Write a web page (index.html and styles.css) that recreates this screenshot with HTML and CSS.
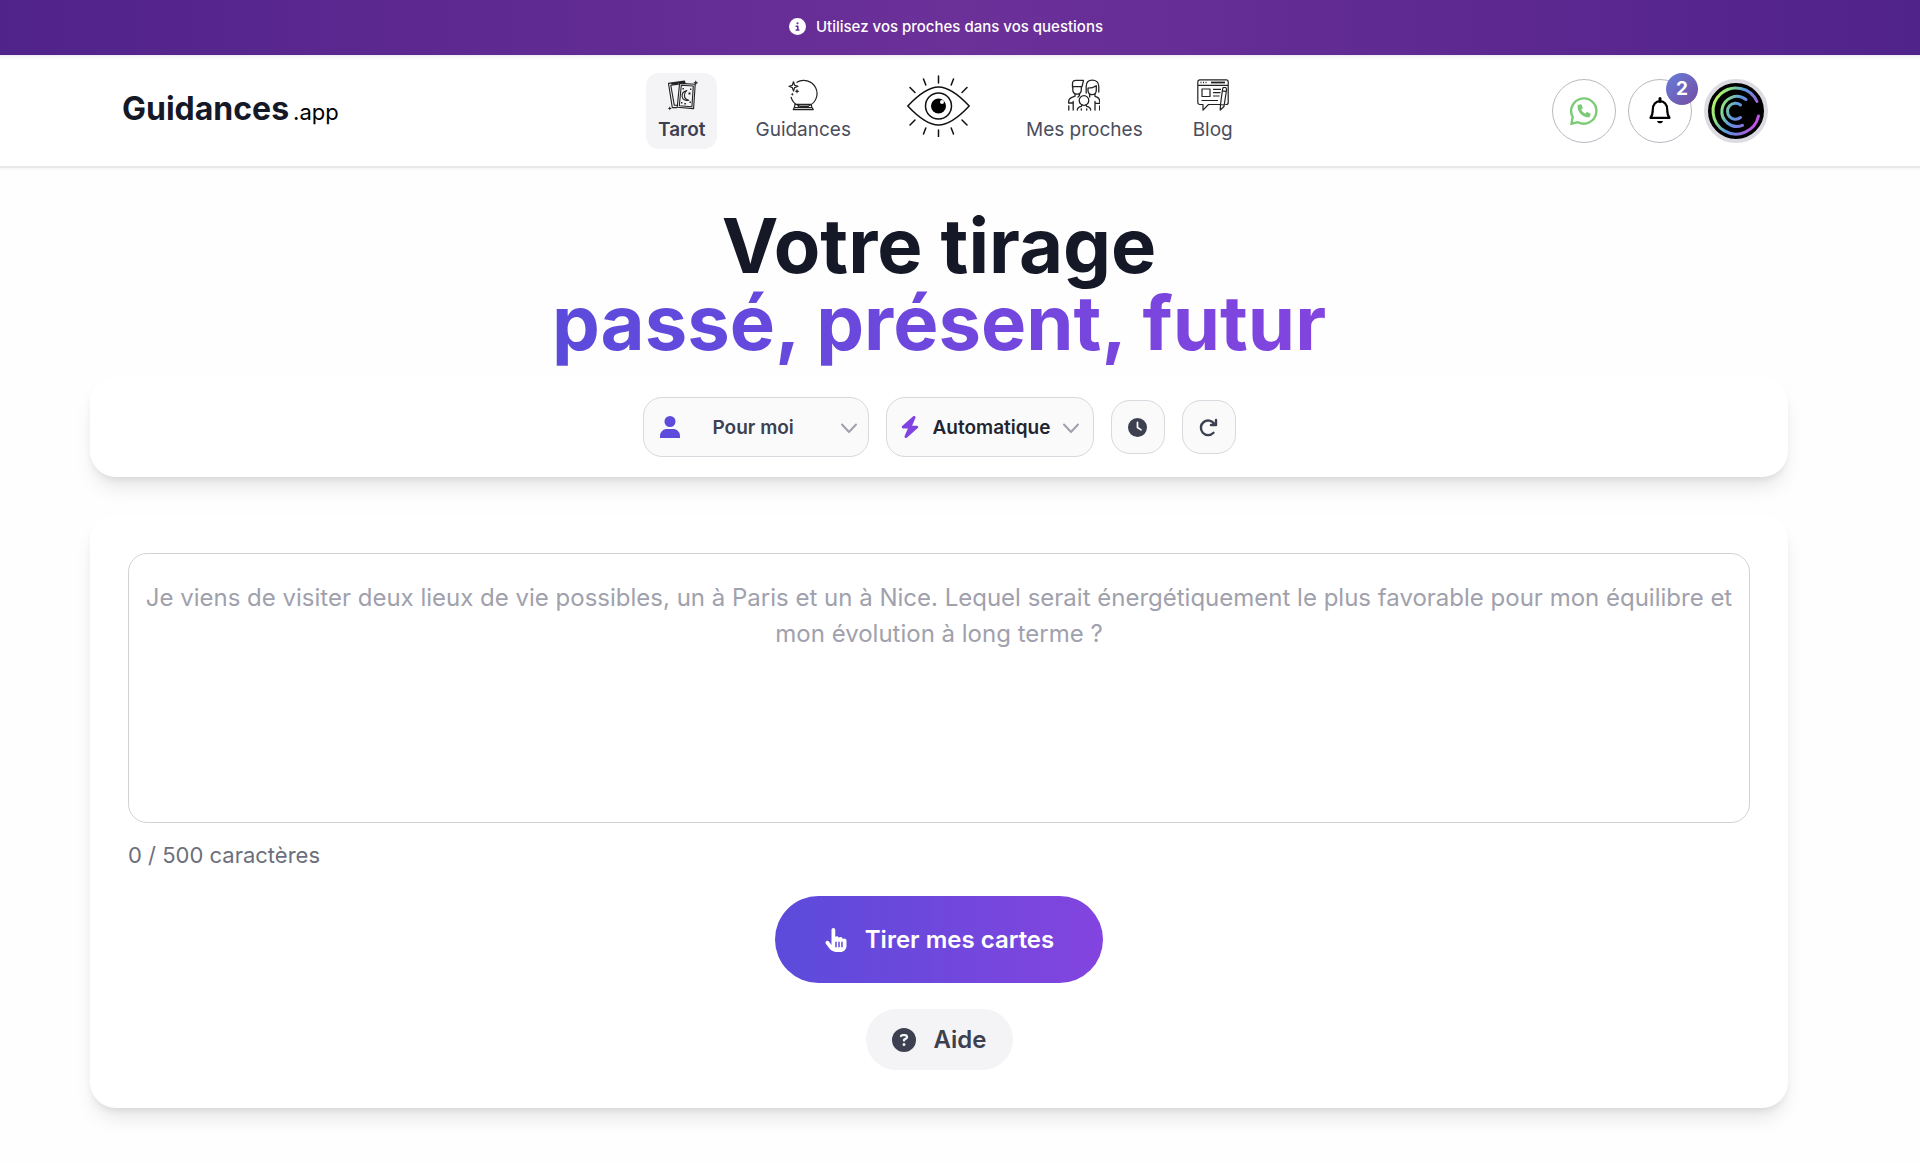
FILE: index.html
```html
<!DOCTYPE html>
<html lang="fr">
<head>
<meta charset="utf-8">
<meta name="viewport" content="width=device-width, initial-scale=1">
<title>Guidances.app</title>
<link rel="stylesheet" href="styles.css">
</head>
<body>
<div class="banner">
  <svg class="banner-icon" viewBox="0 0 512 512" fill="currentColor" aria-hidden="true"><path d="M256 512A256 256 0 1 0 256 0a256 256 0 1 0 0 512zM216 336l24 0 0-64-24 0c-13.3 0-24-10.7-24-24s10.7-24 24-24l48 0c13.3 0 24 10.7 24 24l0 88 8 0c13.3 0 24 10.7 24 24s-10.7 24-24 24l-80 0c-13.3 0-24-10.7-24-24s10.7-24 24-24zm40-208a32 32 0 1 1 0 64 32 32 0 1 1 0-64z"/></svg>
  <span>Utilisez vos proches dans vos questions</span>
</div>
<header class="header">
  <a class="logo" href="#"><span class="logo-name">Guidances</span><span class="logo-tld">.app</span></a>
  <nav class="nav">
    <a class="nav-item nav-item-active" href="#">
      <svg class="nav-icon" viewBox="0 0 32 32" fill="none" stroke="#222" stroke-width="1.100" stroke-linejoin="round" aria-hidden="true">
        <path d="M11 28.600H6.300L2.500 4.400 18.500 2.100l.8 2.900M12 26.300H8.300L4.800 6.300l8-1.200M5.300 4.900l13-1.600"/>
        <path d="M13.600 4.400 29.200 5.300 27.600 29.600 11.200 28.300z"/><path d="M15.300 6.300 27.300 7l-1.400 20.700-12.600-1z"/>
        <path d="M20.800 11.600c-3.500.8-5 3.300-4.700 5.900.4 2.900 3 4.500 6.700 3.700-3.300-.6-4.600-3-4.300-5.400.2-1.900 1-3.300 2.300-4.200z"/>
        <path stroke="none" fill="#222" d="M16.500 9h1.400v1.400h-1.400zM24 9.500h1.400v1.400H24zM22.500 13.500h2v2h-2zM15 23h1.400v1.400H15zM18.300 24h1.600v1.600h-1.600zM23.500 22.500h1.400v1.400h-1.400zM29.800 1.200l.7 1.900 1.900.7-1.900.7-.7 1.900-.7-1.900-1.900-.7 1.900-.7zM3.800 27.300l.6 1.500 1.500.6-1.500.6-.6 1.500-.6-1.500-1.500-.6 1.500-.6z"/>
      </svg>
      <span>Tarot</span>
    </a>
    <a class="nav-item" href="#">
      <svg class="nav-icon" viewBox="0 0 32 32" fill="none" stroke="#222" stroke-width="1.200" stroke-linejoin="round" aria-hidden="true">
        <path d="M9.500 3.600A13.200 13.200 0 1 1 4 17.800M7.500 25.300h17.200M8 25.500l-.7 3.200H25l-.8-3.200M6.300 30.600h20l-1.300-2H7.300zM11 28.500l.5-1.300h9.500l.5 1.300"/>
        <path fill="#fff" d="M6.500 2.800 7.600 6.200 11 7.300 7.600 8.600 6.500 12 5.300 8.600 2 7.300 5.300 6.200z"/>
        <path stroke="none" fill="#222" d="M10 9.800l.7 1.800 1.800.7-1.800.7-.7 1.800-.7-1.800-1.800-.7 1.800-.7zM5.300 13.500l.5 1.200 1.200.5-1.200.5-.5 1.200-.5-1.200-1.200-.5 1.200-.5z"/>
      </svg>
      <span>Guidances</span>
    </a>
    <a class="nav-eye" href="#" aria-label="Accueil">
      <svg class="eye-icon" viewBox="0 0 63 62" fill="none" stroke="#111" stroke-width="1.500" stroke-linecap="round" aria-hidden="true">
        <path d="M.8 31C13 18 22 12 31.500 12S50 18 62.200 31C50 44 41 50 31.500 50S13 44 .8 31z" stroke-linejoin="round"/>
        <circle cx="31.500" cy="31" r="13"/><circle cx="31.500" cy="31" r="7.500" fill="#000" stroke="none"/><circle cx="35" cy="27" r="2" fill="#fff" stroke="none"/>
        <path d="M31.500 1v7M31.500 55v7M16.500 4l2.300 6M46.500 4l-2.300 6M3 12.500l5 5M60 12.500l-5 5M3 50l5-5M60 50l-5-5M16.500 59l2.300-6M46.500 59l-2.300-6"/>
      </svg>
    </a>
    <a class="nav-item" href="#">
      <svg class="nav-icon" viewBox="0 0 32 32" fill="none" stroke="#222" stroke-width="1.300" stroke-linejoin="round" stroke-linecap="round" aria-hidden="true">
        <path d="M4.500 8.300V4.300C4.500 2 6 1.300 8 1.300h7.500L14 7.600H4.500M4.800 8v2.800c0 2.600 1.800 4.300 4.300 4.300s4.200-1.700 4.200-4.300V7.800M7 15v2.200L4 18.300C1.500 19.300.6 21 .6 23v1h4.500M.8 27v4M5.200 22.500V31M11.500 15v1.500l-1.600 1.600"/>
        <path d="M18.200 14V7.500C18.200 3.500 20.500 1.200 24.200 1.200S30.800 3.500 30.800 7.500V13M20 9.200c3.500 0 6-.8 8.300-2.400v4.500c0 2.500-1.700 4.300-4.100 4.300S20 13.800 20 11.300zM27 15.300v2l2 .8c2.300 1 2.800 2.500 2.800 4.700v1.500h-4M31.700 27v4M27 22.500V31M21.500 15.500l.2 2.500"/>
        <circle cx="16" cy="21.500" r="4.800"/><path d="M9.300 31c.2-2 1.500-3.200 4-3.600l.8-1.500M22.700 31c-.2-2-1.500-3.200-4-3.600l-.8-1.500M13.300 31v-1M18.700 31v-1"/>
      </svg>
      <span>Mes proches</span>
    </a>
    <a class="nav-item" href="#">
      <svg class="nav-icon" viewBox="0 0 32 32" fill="none" stroke="#222" stroke-width="1.200" stroke-linejoin="round" aria-hidden="true">
        <path d="M23 25.500H11.500L6 31.200V25.500H2.800A2 2 0 0 1 .8 23.500V2.900a2 2 0 0 1 2-2h26.400a2 2 0 0 1 2 2v20.600a2 2 0 0 1-2 2h-1M.8 6.300h30.400"/>
        <path d="M3.500 3.500h1M6 3.500h1M8.500 3.500h1" stroke-width="1.300"/><path d="M14 3.500h14" stroke-width="1.800"/>
        <path d="M5 10h8v7.500H5zM16 10.300h8M16 13.700h7.500M16 17h6.500M4.500 21.500h16.500M25.500 10.500l.7-2h2.600l.8 2-2.600 17-3.800 3.500.3-5.500zM25 11.800l4 .5M23.300 25.500l3.700.5"/>
      </svg>
      <span>Blog</span>
    </a>
  </nav>
  <div class="actions">
    <a class="round" href="#" aria-label="WhatsApp">
      <svg class="icon-28" viewBox="0 0 28 28" fill="none" aria-hidden="true"><path d="M2.700 20A12.600 12.600 0 1 1 8 25.200L1.500 26.700z" stroke="#7bcb76" stroke-width="2.400"/><path fill="#7bcb76" transform="translate(7.500 7.300) scale(.0255)" d="M164.900 24.600c-7.700-18.600-28-28.500-47.400-23.200l-88 24C12.100 30.200 0 46 0 64C0 311.400 200.600 512 448 512c18 0 33.800-12.100 38.600-29.500l24-88c5.300-19.400-4.600-39.700-23.200-47.400l-96-40c-16.300-6.800-35.200-2.100-46.300 11.600L304.700 368C234.300 334.700 177.300 277.700 144 207.300L193.300 167c13.700-11.200 18.400-30 11.600-46.300l-40-96z"/></svg>
    </a>
    <button class="round" type="button" aria-label="Notifications">
      <svg class="icon-28" viewBox="0 0 28 28" fill="none" aria-hidden="true"><path d="M4.500 20.800h19c-1.800-2.300-2.300-4-2.300-8.300 0-4.800-2.900-8.300-7.200-8.300S6.800 7.700 6.800 12.500c0 4.300-.5 6-2.300 8.300z" stroke="#000" stroke-width="2.200" stroke-linejoin="round"/><path d="M14 1.500v3" stroke="#000" stroke-width="3" stroke-linecap="round"/><path d="M11 24h6c-.5 1.500-1.500 2.300-3 2.300s-2.500-.8-3-2.300z" fill="#000"/></svg>
      <span class="badge">2</span>
    </button>
    <button class="avatar" type="button" aria-label="Mon compte">
      <svg viewBox="0 0 56 56" fill="none" stroke="url(#rings)" stroke-width="3" stroke-linecap="round" aria-hidden="true">
        <defs><linearGradient id="rings" gradientUnits="userSpaceOnUse" x1="5" y1="18" x2="51" y2="38"><stop offset="0" stop-color="#b7f565"/><stop offset=".2" stop-color="#8fe283"/><stop offset=".48" stop-color="#5b9ae0"/><stop offset=".75" stop-color="#8b70dc"/><stop offset="1" stop-color="#c950e6"/></linearGradient></defs>
        <path d="M49 18.500A23 23 0 1 0 50.500 33"/><path d="M38 16.500A15 15 0 1 0 34.500 42.300"/><path d="M32.500 22A8 8 0 1 0 32.500 34.500"/>
      </svg>
    </button>
  </div>
</header>
<main class="main">
  <h1 class="title">Votre tirage<br><span class="title-accent">passé, présent, futur</span></h1>
  <section class="card toolbar" aria-label="Options du tirage">
    <label class="picker">
      <svg class="picker-icon picker-user" viewBox="0 0 24 24" fill="#5d4bdb" aria-hidden="true"><circle cx="12" cy="6.500" r="5.500"/><path d="M2 23v-2c0-4.300 3.300-7 7-7h6c3.700 0 7 2.700 7 7v2z"/></svg>
      <select class="select select-who" aria-label="Pour qui"><option>Pour moi</option></select>
      <svg class="chevron" viewBox="0 0 18 18" aria-hidden="true"><path d="M2 5.500l7 7.500 7-7.500"/></svg>
    </label>
    <label class="picker">
      <svg class="picker-icon picker-bolt" viewBox="0 0 448 512" fill="#8043df" aria-hidden="true"><path d="M349.400 44.600c5.900-13.700 1.500-29.700-10.600-38.500s-28.600-8-39.900 1.800l-256 224c-10 8.800-13.600 22.900-8.900 35.300S50.700 288 64 288l111.500 0L98.600 467.400c-5.900 13.700-1.500 29.700 10.600 38.500s28.600 8 39.900-1.800l256-224c10-8.800 13.600-22.900 8.900-35.300s-16.600-20.700-30-20.700l-111.500 0L349.400 44.600z"/></svg>
      <select class="select select-mode" aria-label="Mode de tirage"><option>Automatique</option></select>
      <svg class="chevron chevron-mode" viewBox="0 0 18 18" aria-hidden="true"><path d="M2 5.500l7 7.500 7-7.500"/></svg>
    </label>
    <button class="tool" type="button" aria-label="Historique">
      <svg class="icon-19" viewBox="0 0 512 512" fill="currentColor" aria-hidden="true"><path d="M256 0a256 256 0 1 1 0 512A256 256 0 1 1 256 0zM232 120l0 136c0 8 4 15.500 10.700 20l96 64c11 7.400 25.900 4.400 33.300-6.700s4.400-25.900-6.700-33.300L280 243.200 280 120c0-13.300-10.700-24-24-24s-24 10.700-24 24z"/></svg>
    </button>
    <button class="tool" type="button" aria-label="Recommencer">
      <svg class="icon-19" viewBox="0 0 19 19" fill="none" stroke="currentColor" stroke-width="2.400" stroke-linecap="round" stroke-linejoin="round" aria-hidden="true"><path d="M14.500 14.800A7.300 7.300 0 1 1 15.300 5.800M17 2v5h-5"/></svg>
    </button>
  </section>
  <form class="card question">
    <textarea class="question-text" aria-label="Votre question" maxlength="500" placeholder="Je viens de visiter deux lieux de vie possibles, un à Paris et un à Nice. Lequel serait énergétiquement le plus favorable pour mon équilibre et mon évolution à long terme ?"></textarea>
    <p class="counter">0 / 500 caractères</p>
    <button class="draw" type="button">
      <svg class="icon-24" viewBox="0 0 448 512" fill="currentColor" aria-hidden="true"><path d="M128 40c0-22.100 17.900-40 40-40s40 17.900 40 40l0 148.200c8.500-7.600 19.700-12.200 32-12.200c20.600 0 38.200 13 45 31.200c8.800-9.300 21.200-15.200 35-15.200c25.300 0 46 19.500 47.900 44.300c8.500-7.700 19.800-12.300 32.100-12.300c26.500 0 48 21.500 48 48l0 48 0 16 0 48c0 70.700-57.300 128-128 128l-16 0-64 0-.1 0-5.200 0c-5 0-9.900-.3-14.700-1c-55.300-5.600-106.200-34-140-79L8 336c-13.300-17.700-9.700-42.700 8-56s42.700-9.700 56 8l56 74.700L128 40zM240 304c0-8.800-7.200-16-16-16s-16 7.200-16 16l0 96c0 8.800 7.200 16 16 16s16-7.200 16-16l0-96zm48-16c-8.800 0-16 7.200-16 16l0 96c0 8.800 7.200 16 16 16s16-7.200 16-16l0-96c0-8.800-7.200-16-16-16zm80 16c0-8.800-7.200-16-16-16s-16 7.200-16 16l0 96c0 8.800 7.200 16 16 16s16-7.200 16-16l0-96z"/></svg>
      <span>Tirer mes cartes</span>
    </button>
    <button class="help" type="button">
      <svg class="icon-24" viewBox="0 0 512 512" fill="currentColor" aria-hidden="true"><path d="M256 512A256 256 0 1 0 256 0a256 256 0 1 0 0 512zM169.800 165.300c7.900-22.300 29.100-37.300 52.800-37.300l58.300 0c34.900 0 63.100 28.300 63.100 63.100c0 22.600-12.100 43.500-31.700 54.800L280 264.400c-.2 13-10.900 23.600-24 23.600c-13.300 0-24-10.700-24-24l0-13.500c0-8.600 4.600-16.500 12.100-20.800l44.300-25.400c4.700-2.700 7.600-7.700 7.600-13.100c0-8.400-6.800-15.100-15.100-15.100l-58.300 0c-3.400 0-6.400 2.100-7.500 5.300l-.4 1.200c-4.400 12.500-18.200 19-30.700 14.600s-19-18.200-14.600-30.700l.4-1.200zM224 352a32 32 0 1 1 64 0 32 32 0 1 1 -64 0z"/></svg>
      <span>Aide</span>
    </button>
  </form>
</main>
</body>
</html>
```
FILE: styles.css
```css
* { box-sizing: border-box; }
body {
  margin: 0;
  background: #fefefe;
  color: #151827;
  font-family: Inter, "Liberation Sans", sans-serif;
  font-size: 19px;
}
a { color: inherit; text-decoration: none; }
button, select, textarea { font: inherit; color: inherit; }
button { border: 0; padding: 0; cursor: pointer; }
svg { display: block; flex: none; }

.banner {
  display: flex;
  align-items: center;
  justify-content: center;
  gap: 10px;
  height: 55px;
  padding: 0 28px 2px 0;
  background: linear-gradient(90deg, #50238a 0%, #6c3099 50%, #50238a 100%);
  color: #fff;
  font-size: 15px;
  font-weight: 500;
}
.banner-icon { width: 17px; height: 17px; }

.header {
  display: flex;
  align-items: center;
  justify-content: space-between;
  height: 113px;
  padding: 0 152px 0 122px;
  background: linear-gradient(#f0e8f8 0, #f8f8f9 2px, #fff 6px);
  border-bottom: 2px solid #e8e8ea;
  box-shadow: 0 1px 3px rgba(0, 0, 0, .05);
}
.logo { display: flex; align-items: baseline; gap: 4px; padding-bottom: 4px; }
.logo-name { font-size: 32px; font-weight: 700; }
.logo-tld { font-size: 22px; color: #000; }

.nav { display: flex; gap: 26px; }
.nav-item {
  display: flex;
  flex-direction: column;
  align-items: center;
  gap: 5px;
  padding: 6px 12px 5px;
  border-radius: 13px;
  color: #4a4d5c;
  line-height: 28px;
}
.nav-item-active { background: #f4f4f7; color: #3c4050; font-weight: 600; }
.nav-icon { width: 32px; height: 32px; }
.nav-eye { padding: 2px 18px; }
.eye-icon { width: 63px; height: 62px; }

.actions { display: flex; align-items: center; gap: 12px; }
.round {
  position: relative;
  display: grid;
  place-items: center;
  width: 64px;
  height: 64px;
  border: 1px solid #b9b9c2;
  border-radius: 50%;
  background: #fff;
}
.badge {
  position: absolute;
  top: -7px;
  right: -7px;
  width: 32px;
  height: 32px;
  border-radius: 50%;
  background: linear-gradient(135deg, #667eda, #764ba2);
  color: #fff;
  font-size: 19px;
  font-weight: 700;
  line-height: 32px;
  text-align: center;
}
.avatar {
  width: 64px;
  height: 64px;
  border: 4px solid #dcdbe2;
  border-radius: 50%;
  background: #000;
}
.icon-28 { width: 28px; height: 28px; }
.icon-24 { width: 24px; height: 24px; }
.icon-19 { width: 19px; height: 19px; }

.main { padding: 39px 132px 55px 90px; }
.title {
  margin: 0 0 16px;
  font-size: 76px;
  font-weight: 700;
  line-height: 77px;
  text-align: center;
}
.title-accent {
  padding-bottom: 4px;
  background: linear-gradient(90deg, #5b4bdb, #8344df);
  background-clip: text;
  -webkit-background-clip: text;
  color: transparent;
}
.card {
  border-radius: 26px;
  background: #fff;
  box-shadow: 0 13px 20px -4px rgba(0, 0, 0, .1), 0 5px 8px -4px rgba(0, 0, 0, .1);
}
.toolbar {
  display: flex;
  align-items: center;
  justify-content: center;
  gap: 17px;
  padding: 20px;
}
.picker { position: relative; display: flex; }
.picker-icon { position: absolute; left: 13px; top: 19px; width: 22px; height: 22px; pointer-events: none; }
.picker-user { left: 15px; top: 18px; width: 24px; height: 24px; }
.select {
  height: 60px;
  border: 1px solid #d8d8de;
  border-radius: 19px;
  background: #fafafb;
  appearance: none;
  font-weight: 600;
}
.select-who { width: 226px; padding: 0 69px; color: #3c4050; }
.select-mode { width: 208px; padding: 0 40px 0 46px; color: #22252f; }
.chevron {
  position: absolute;
  right: 11px;
  top: 22px;
  width: 18px;
  height: 18px;
  fill: none;
  stroke: #a0a1ab;
  stroke-width: 2;
  stroke-linecap: round;
  stroke-linejoin: round;
  pointer-events: none;
}
.chevron-mode { right: 14px; }
.tool {
  display: grid;
  place-items: center;
  width: 54px;
  height: 54px;
  border: 1px solid #d8d8de;
  border-radius: 19px;
  background: #fafafb;
  color: #3c4050;
}
.question {
  display: flex;
  flex-direction: column;
  align-items: center;
  margin-top: 38px;
  padding: 38px;
}
.question-text {
  width: 100%;
  height: 270px;
  padding: 26px 16px;
  border: 1px solid #d2d2d6;
  border-radius: 19px;
  background: #fff;
  font-size: 24px;
  line-height: 36px;
  text-align: center;
  resize: none;
}
.question-text::placeholder { color: #a0a1ac; opacity: 1; }
.counter {
  align-self: flex-start;
  margin: 16px 0 25px;
  color: #6c6f7b;
  font-size: 22px;
  line-height: 32px;
}
.draw, .help {
  display: flex;
  align-items: center;
  justify-content: center;
  font-size: 24px;
  font-weight: 600;
}
.draw {
  gap: 17px;
  height: 87px;
  padding: 0 49px;
  border-radius: 44px;
  background: linear-gradient(90deg, #5b4bdb, #8344df);
  color: #fff;
}
.help {
  gap: 18px;
  height: 61px;
  margin-top: 26px;
  padding: 0 26px;
  border-radius: 31px;
  background: #f4f4f7;
  color: #3c4050;
}
```
